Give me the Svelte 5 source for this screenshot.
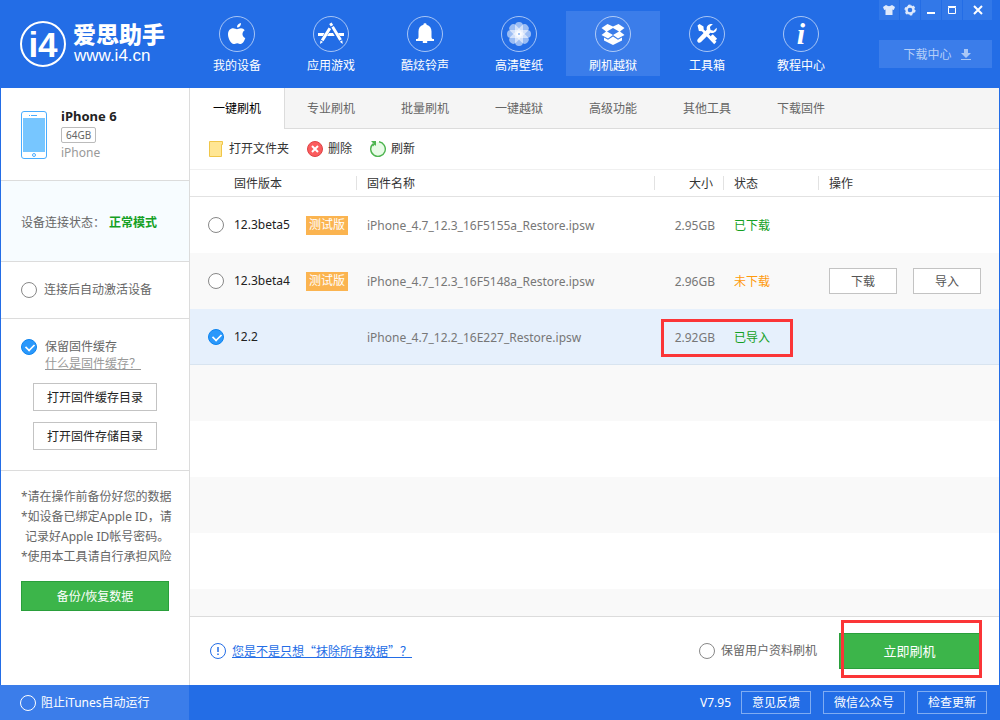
<script lang="ts">
    let navItems = [
        { id: 'device', label: '我的设备' },
        { id: 'apps', label: '应用游戏' },
        { id: 'ring', label: '酷炫铃声' },
        { id: 'wallpaper', label: '高清壁纸' },
        { id: 'flash', label: '刷机越狱' },
        { id: 'tools', label: '工具箱' },
        { id: 'help', label: '教程中心' }
    ];
    let tabs = ['一键刷机', '专业刷机', '批量刷机', '一键越狱', '高级功能', '其他工具', '下载固件'];

    let firmwares = [
        { version: '12.3beta5', beta: true, file: 'iPhone_4.7_12.3_16F5155a_Restore.ipsw', size: '2.95GB', state: '已下载' },
        { version: '12.3beta4', beta: true, file: 'iPhone_4.7_12.3_16F5148a_Restore.ipsw', size: '2.96GB', state: '未下载' },
        { version: '12.2', beta: false, file: 'iPhone_4.7_12.2_16E227_Restore.ipsw', size: '2.92GB', state: '已导入' }
    ];

    let activeNav = $state('flash');
    let activeTab = $state('一键刷机');
    let selected = $state('12.2');
    let autoActivate = $state(false);
    let keepCache = $state(true);
    let keepData = $state(false);
    let blockItunes = $state(false);
</script>

<div class="app">
    <header>
        <div class="logo">
            <svg width="48" height="48" viewBox="0 0 48 48">
                <circle cx="24" cy="24" r="22" fill="none" stroke="#fff" stroke-width="2" />
                <text x="24" y="37" text-anchor="middle" class="mark">i4</text>
            </svg>
            <div class="brand">
                <strong>爱思助手</strong>
                <span>www.i4.cn</span>
            </div>
        </div>

        <nav>
            {#each navItems as item}
                <button class="nav-item" class:active={activeNav === item.id} onclick={() => activeNav = item.id}>
                    <svg width="36" height="36" viewBox="0 0 36 36" fill="#fff">
                        <circle cx="18" cy="18" r="17.5" fill="none" stroke="#fff" stroke-opacity=".6" />
                        {#if item.id === 'device'}
                            <path d="M22 7c.2 2.500-1.700 4.600-4 4.500C17.800 9.200 19.700 7.200 22 7z" />
                            <path d="M18 13.200c1 0 2-1 4-1 1.600 0 2.900.8 3.700 2-3.300 2-2.700 6.500.6 7.900C25.500 24.600 23.800 28 21.700 28c-1.300 0-1.900-.8-3.500-.8s-2.200.8-3.500.8C12 28 9 22.500 9 18.200c0-3.700 2.400-6 5.100-6 1.600 0 2.800 1 3.900 1z" />
                        {:else if item.id === 'apps'}
                            <path d="M5 17h6.500l-1.600 3H5zM16 17h4l1.700 3H14zM25 17h6v3h-4.200z" />
                            <path d="M15.600 11.500l2.500 1.500-7.600 12.300-2.600-1.600zM7.500 24.500l2.500 1.500-3 2z" />
                            <path d="M16.200 8l2.400-1.500 1.600 2.600-2.400 1.500zM18.400 11.600l2.400-1.500 8 13.200-2.500 1.500zM26.800 25.700l2.500-1.500.4 3.800z" />
                        {:else if item.id === 'ring'}
                            <path d="M16.500 8c0-1 3-1 3 0v.8c3.500.8 5 3.400 5 6.700v5c0 2 .5 2.500 2.500 2.500v2H9v-2c2 0 2.500-.5 2.500-2.500v-5c0-3.300 1.500-5.900 5-6.700zM15.800 25h4.400v2h-4.400z" />
                        {:else if item.id === 'wallpaper'}
                            {#each [0, 45, 90, 135, 180, 225, 270, 315] as angle}
                                <rect x="14" y="6" width="8" height="13" rx="4" fill-opacity=".55" transform="rotate({angle} 18 18)" />
                            {/each}
                            <circle cx="18" cy="18" r="1" fill="#8ab4f3" />
                        {:else if item.id === 'flash'}
                            <path d="M12.500 8l5.500 2.500 5.500-2.500 6 4-4.500 3.500 4.500 3.500-6.500 3.500-5-3.500-5 3.500-6.500-3.500 4.500-3.500-4.500-3.500zM18 12l-6 3.500 6 3.500 6-3.500z" fill-rule="evenodd" />
                            <path d="M9 21.500l4 2.300 5-3.300 5 3.300 4-2.300v3l-9 4.500-9-4.500z" />
                        {:else if item.id === 'tools'}
                            <path d="M8.500 9.500L10.500 8l4 2.400.2 3 12.800 12.300-2.300 2.500-12.300-13-3-.3z" />
                            <path d="M27.600 11.800l-3 3-3-.7-.7-3 3-3c-4-1-7 2-6 5.400l-9 9.500c-2 2.500 1 5 3.200 3l9.300-9.200c3.600 1.300 7.200-1.700 6.200-5z" />
                            <path d="M21.500 20.200l2.300-2 4.300 4.600-2.500 2.500z" />
                        {:else}
                            <text x="18" y="28" text-anchor="middle" class="info">i</text>
                        {/if}
                    </svg>
                    <span>{item.label}</span>
                </button>
            {/each}
        </nav>

        <div class="side-tools">
            <div class="window-buttons">
                <button aria-label="皮肤">
                    <svg width="14" height="12" viewBox="0 0 14 12"><path d="M4 1c1.500 1.500 4.500 1.500 6 0l3 2-1.200 3L10.500 5.500V11h-7V5.500L2.200 6 1 3z" fill="#dfeafc" /></svg>
                </button>
                <button aria-label="设置">
                    <svg width="12" height="12" viewBox="0 0 12 12"><circle cx="6" cy="6" r="3.500" fill="none" stroke="#dfeafc" stroke-width="2.400" /><circle cx="6" cy="6" r="4.800" fill="none" stroke="#dfeafc" stroke-width="1.600" stroke-dasharray="2.500 2.500" /></svg>
                </button>
                <button aria-label="最小化">
                    <svg width="12" height="12" viewBox="0 0 12 12"><path d="M2 8h8v2H2z" fill="#fff" /></svg>
                </button>
                <button aria-label="最大化">
                    <svg width="12" height="12" viewBox="0 0 12 12"><path d="M2.500 3.500h7v6h-7zM2 2.500h8" fill="none" stroke="#fff" /></svg>
                </button>
                <button class="close" aria-label="关闭">
                    <svg width="12" height="12" viewBox="0 0 12 12"><path d="M2 2l8 8M10 2l-8 8" stroke="#fff" stroke-width="2" /></svg>
                </button>
            </div>
            <button class="downloads">
                下载中心
                <svg width="12" height="12" viewBox="0 0 12 12"><path d="M4 0h4v4h3L6 9 1 4h3zM1 10h10v1H1z" fill="#a9c7f6" /></svg>
            </button>
        </div>
    </header>

    <div class="body">
        <aside>
            <section class="device">
                <svg width="26" height="48" viewBox="0 0 26 48">
                    <rect x=".5" y=".5" width="25" height="47" rx="2.500" fill="#fff" stroke="#4aadff" />
                    <path d="M2 7h22v34H2z" fill="#77c6ff" />
                    <path d="M8 4.500h1M10 4.500h6" stroke="#4aadff" />
                    <circle cx="13" cy="44" r="1.500" fill="none" stroke="#4aadff" />
                </svg>
                <div class="device-info">
                    <strong>iPhone 6</strong>
                    <span class="capacity">64GB</span>
                    <span class="model">iPhone</span>
                </div>
            </section>

            <section class="status">设备连接状态：<strong>正常模式</strong></section>

            <section class="activate">
                <label><input type="checkbox" bind:checked={autoActivate} />连接后自动激活设备</label>
            </section>

            <section class="cache">
                <label><input type="checkbox" bind:checked={keepCache} />保留固件缓存</label>
                <a href="#cache">什么是固件缓存？</a>
                <button class="plain">打开固件缓存目录</button>
                <button class="plain">打开固件存储目录</button>
            </section>

            <section class="notes">
                <p>*请在操作前备份好您的数据</p>
                <p class="hang">*如设备已绑定Apple ID，请<br />记录好Apple ID帐号密码。</p>
                <p>*使用本工具请自行承担风险</p>
                <button class="green">备份/恢复数据</button>
            </section>
        </aside>

        <main>
            <div class="tabs">
                {#each tabs as tab}
                    <button class:active={activeTab === tab} onclick={() => activeTab = tab}>{tab}</button>
                {/each}
            </div>

            <div class="toolbar">
                <button>
                    <svg width="16" height="16" viewBox="0 0 16 16"><path d="M1.500.5h13v3h-1v12h-12z" fill="#ffe694" stroke="#f0c649" /></svg>
                    打开文件夹
                </button>
                <button>
                    <svg width="16" height="16" viewBox="0 0 16 16"><circle cx="8" cy="8" r="7.500" fill="#fb5c5e" stroke="#dd4345" /><path d="M5 5l6 6M11 5l-6 6" stroke="#fff" stroke-width="2" /></svg>
                    删除
                </button>
                <button>
                    <svg width="16" height="16" viewBox="0 0 16 16"><circle cx="8" cy="8" r="7" fill="#e8fbe7" /><path d="M9 .8A7.300 7.300 0 1 1 3 2.700" fill="none" stroke="#4eb550" stroke-width="1.400" /><path d="M1 0h5v5L4.700 3.700 3 5.500 2 4.500l1.500-2z" fill="#4eb550" /></svg>
                    刷新
                </button>
            </div>

            <div class="list">
                <table>
                    <thead>
                        <tr>
                            <th class="col-version"><span>固件版本</span></th>
                            <th><span>固件名称</span></th>
                            <th class="col-size"><span>大小</span></th>
                            <th class="col-state"><span>状态</span></th>
                            <th class="col-action"><span>操作</span></th>
                        </tr>
                    </thead>
                    <tbody>
                        {#each firmwares as fw}
                            <tr class:selected={selected === fw.version}>
                                <td class="version">
                                    <label>
                                        <input type="radio" name="firmware" value={fw.version} bind:group={selected} />
                                        <span>{fw.version}</span>
                                        {#if fw.beta}<em>测试版</em>{/if}
                                    </label>
                                </td>
                                <td>{fw.file}</td>
                                <td class="size">
                                    {fw.size}
                                    {#if fw.state === '已导入'}<i class="callout callout-row"></i>{/if}
                                </td>
                                <td class="state" class:pending={fw.state === '未下载'}>{fw.state}</td>
                                <td class="action">
                                    {#if fw.state === '未下载'}
                                        <div class="actions">
                                            <button class="plain">下载</button>
                                            <button class="plain">导入</button>
                                        </div>
                                    {/if}
                                </td>
                            </tr>
                        {/each}
                    </tbody>
                </table>
                <div class="stripes"></div>
            </div>

            <div class="bottom">
                <svg width="16" height="16" viewBox="0 0 16 16"><circle cx="8" cy="8" r="7.500" fill="none" stroke="#236de6" /><path d="M8 4v5M8 10.500v1.500" stroke="#236de6" stroke-width="1.500" /></svg>
                <a href="#erase">您是不是只想“抹除所有数据”？</a>
                <label><input type="checkbox" bind:checked={keepData} />保留用户资料刷机</label>
                <div class="go-wrap">
                    <button class="green go">立即刷机</button>
                    <i class="callout callout-go"></i>
                </div>
            </div>
        </main>
    </div>

    <footer>
        <label class="itunes"><input type="checkbox" bind:checked={blockItunes} />阻止iTunes自动运行</label>
        <div class="links">
            <span>V7.95</span>
            <button>意见反馈</button>
            <button class="wide">微信公众号</button>
            <button>检查更新</button>
        </div>
    </footer>
</div>

<style>
:global(body) {
    margin: 0;
}

.app {
    --blue: #236de6;
    --line: #dcdcdc;
    height: 100vh;
    min-height: 640px;
    display: flex;
    flex-direction: column;
    background: var(--blue);
    color: #666;
    font: 12px/18px "Noto Sans", "Noto Sans CJK SC", sans-serif;
    }
    .app * {
        box-sizing: border-box;
        }

button {
    font: inherit;
    color: inherit;
    margin: 0;
    padding: 0;
    border: 0;
    background: none;
    cursor: pointer;
    }
svg {
    display: block;
    flex: none;
    }

input {
    appearance: none;
    position: relative;
    flex: none;
    width: 16px;
    height: 16px;
    margin: 0;
    border: 1px solid #888;
    border-radius: 50%;
    background: #fff;
    }
    input:checked {
        border-color: #0d84f0;
        background: #2a98fb;
        }
        input:checked::after {
            content: "";
            position: absolute;
            left: 3px;
            top: 3px;
            width: 8px;
            height: 5px;
            border: solid #fff;
            border-width: 0 0 2px 2px;
            transform: rotate(-45deg) scale(.85);
            }
label {
    display: flex;
    align-items: center;
    gap: 7px;
    }

/* header */
header {
    flex: none;
    height: 88px;
    display: flex;
    color: #fff;
    }
.logo {
    width: 190px;
    flex: none;
    display: flex;
    align-items: center;
    gap: 6px;
    padding-left: 19px;
    }
    .mark {
        font: bold 35px "Liberation Sans Narrow", "Liberation Sans", sans-serif;
        fill: #fff;
        }
    .brand {
        display: flex;
        flex-direction: column;
        gap: 2px;
        }
        .brand strong {
            font-size: 23px;
            font-weight: 900;
            line-height: 22px;
            }
        .brand span {
            padding-left: 1px;
            font: 17px/18px "Liberation Sans", sans-serif;
            }
nav {
    display: flex;
    align-items: flex-start;
    padding-top: 11px;
    }
    .nav-item {
        width: 94px;
        height: 65px;
        display: flex;
        flex-direction: column;
        align-items: center;
        gap: 5px;
        padding-top: 5px;
        }
        .nav-item.active {
            background: #3b7dea;
            }
    .info {
        font: italic bold 30px "Liberation Serif", serif;
        }
.side-tools {
    width: 113px;
    margin-left: auto;
    margin-right: 8px;
    display: flex;
    flex-direction: column;
    gap: 20px;
    }
    .window-buttons {
        display: flex;
        gap: 1px;
        }
        .window-buttons button {
            width: 20px;
            height: 20px;
            display: grid;
            place-items: center;
            background: #3278e8;
            }
            .window-buttons .close {
                flex: 1;
                }
    .downloads {
        height: 28px;
        display: flex;
        align-items: center;
        justify-content: center;
        gap: 8px;
        padding: 2px 0 0 4px;
        background: #3b7dea;
        color: #b5cff8;
        }

/* sidebar */
.body {
    flex: 1;
    min-height: 0;
    display: flex;
    margin: 0 1px;
    background: #fff;
    }
aside {
    width: 189px;
    flex: none;
    border-right: 1px solid var(--line);
    }
    aside section {
        padding: 0 20px;
        border-bottom: 1px solid var(--line);
        }
    aside .device {
        height: 93px;
        display: flex;
        gap: 14px;
        padding-top: 23px;
        }
    .device-info {
        display: flex;
        flex-direction: column;
        align-items: flex-start;
        margin-top: -4px;
        }
        .device-info strong {
            color: #222;
            font-size: 13px;
            }
        .capacity {
            height: 16px;
            margin: 2px 0 1px;
            padding: 0 4px;
            border: 1px solid #bbb;
            border-radius: 2px;
            font-size: 10px;
            line-height: 14px;
            }
        .model {
            color: #999;
            }
    aside .status {
        height: 81px;
        display: flex;
        align-items: center;
        gap: 4px;
        padding-top: 3px;
        background: #f7fcff;
        }
        .status strong {
            color: #14a024;
            }
    aside .activate {
        height: 57px;
        display: flex;
        align-items: center;
        }
    aside .cache {
        height: 152px;
        padding-top: 19px;
        }
        .cache label {
            gap: 8px;
            }
        .cache a {
            display: block;
            margin: -1px 0 10px 24px;
            color: #999;
            }
        .cache .plain {
            display: block;
            width: 124px;
            height: 28px;
            margin: 0 0 11px 12px;
            color: #222;
            }
    aside .notes {
        padding-top: 16px;
        border-bottom: 0;
        line-height: 20px;
        white-space: nowrap;
        }
        .notes p {
            margin: 0;
            }
            .notes .hang {
                padding-left: 4px;
                text-indent: -4px;
                }
        .notes .green {
            width: 148px;
            height: 30px;
            margin-top: 14px;
            }

.plain,
.green {
    padding-top: 2px;
    border: 1px solid #c3c3c3;
    background: #fff;
    }
.green {
    border-color: #2a9f3b;
    background: #3cb54a;
    color: #fff;
    }

/* main */
main {
    flex: 1;
    min-width: 0;
    display: flex;
    flex-direction: column;
    }
.tabs {
    flex: none;
    height: 41px;
    display: flex;
    background: #f5f5f5;
    box-shadow: inset 0 -1px var(--line);
    }
    .tabs button {
        width: 94px;
        padding-top: 1px;
        }
        .tabs .active {
            width: 95px;
            margin-right: -1px;
            border-right: 1px solid var(--line);
            background: #fff;
            color: #000;
            }
.toolbar {
    flex: none;
    height: 41px;
    display: flex;
    align-items: center;
    gap: 18px;
    padding-left: 18px;
    border-bottom: 1px solid #f0f0f0;
    color: #333;
    }
    .toolbar button {
        display: flex;
        align-items: center;
        gap: 5px;
        }

.list {
    flex: 1;
    min-height: 0;
    display: flex;
    flex-direction: column;
    overflow: hidden;
    border-bottom: 1px solid var(--line);
    }
    .stripes {
        flex: 1;
        background: repeating-linear-gradient(#f9f9f9 0 56px, #fff 56px 112px);
        }
table {
    width: 100%;
    table-layout: fixed;
    border-spacing: 0;
    }
    th {
        height: 27px;
        padding: 0;
        border-bottom: 1px solid #e2e2e2;
        color: #333;
        font-weight: normal;
        text-align: left;
        }
        th span {
            display: block;
            height: 14px;
            border-left: 1px solid #e2e2e2;
            padding: 0 10px;
            line-height: 16px;
            }
    .col-version { width: 166px; }
        .col-version span {
            border: 0;
            padding-left: 44px;
            }
    .col-size { width: 69px; }
        .col-size span {
            text-align: right;
            }
    .col-state { width: 95px; }
    .col-action { width: 181px; }

    td {
        height: 56px;
        padding: 2px 0 0 11px;
        color: #777;
        white-space: nowrap;
        }
        tbody tr:nth-child(even) {
            background: #f9f9f9;
            }
        tbody .selected,
        tbody .selected:nth-child(even) {
            background: #e6f0fc;
            }
            .selected td {
                border-bottom: 1px solid #d8e4f0;
                }
        .version {
            padding: 0 0 0 18px;
            color: #222;
            }
            .version label {
                gap: 10px;
                }
            .version span {
                width: 62px;
                }
            .version em {
                height: 19px;
                padding: 0 3px;
                background: #fbb450;
                color: #fff;
                font-style: normal;
                }
        .size {
            position: relative;
            padding-right: 8px;
            text-align: right;
            }
        .state {
            color: #14a024;
            }
            .state.pending {
                color: #ff9a0c;
                }
        .action {
            padding-top: 0;
            }
    .actions {
        display: flex;
        gap: 16px;
        }
        .actions .plain {
            width: 68px;
            height: 26px;
            color: #555;
            }

.callout {
    position: absolute;
    border: 3px solid #fb3537;
    pointer-events: none;
    z-index: 1;
    }
    .callout-row {
        left: 7px;
        top: 10px;
        width: 132px;
        height: 38px;
        }
    .callout-go {
        left: 2px;
        top: -13px;
        width: 141px;
        height: 58px;
        }

.bottom {
    flex: none;
    height: 68px;
    display: flex;
    align-items: center;
    padding: 0 19px 0 20px;
    }
    .bottom a {
        margin-left: 6px;
        color: var(--blue);
        font-family: "Noto Sans CJK SC", sans-serif;
        }
    .bottom label {
        margin-left: auto;
        gap: 6px;
        }
    .go-wrap {
        position: relative;
        margin-left: 22px;
        }
        .go {
            display: block;
            width: 141px;
            height: 36px;
            padding-top: 0;
            font-size: 13px;
            }

/* footer */
footer {
    flex: none;
    height: 35px;
    display: flex;
    justify-content: space-between;
    color: #fff;
    }
    .itunes {
        width: 189px;
        gap: 5px;
        padding-left: 20px;
        background: #3b7dea;
        }
        .itunes input:not(:checked) {
            border-color: #fff;
            background: none;
            }
    .links {
        display: flex;
        align-items: center;
        gap: 12px;
        padding-right: 13px;
        }
        .links span {
            margin-right: -2px;
            }
        .links button {
            width: 70px;
            height: 23px;
            border: 1px solid #7facf2;
            }
            .links .wide {
                width: 82px;
                }
</style>
